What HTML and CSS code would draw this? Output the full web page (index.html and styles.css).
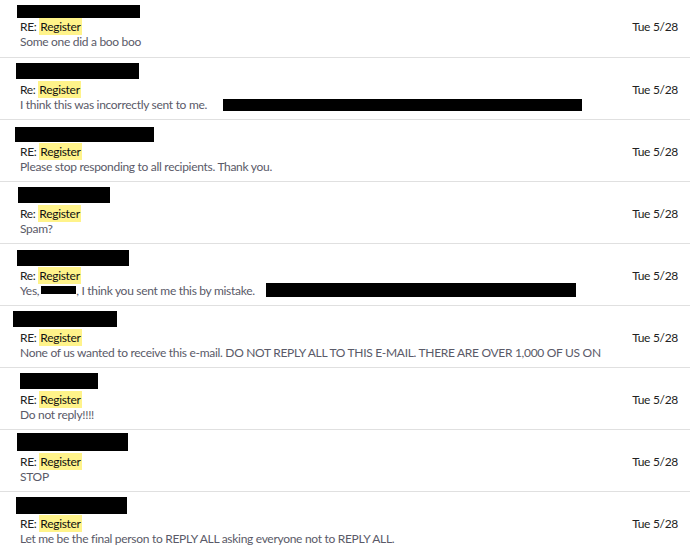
FILE: index.html
```html
<!DOCTYPE html>
<html>
<head>
<meta charset="utf-8">
<link rel="stylesheet" href="styles.css">
</head>
<body>
<div class="list">
  <div class="row first">
    <div class="main">
      <div class="sender"><span class="redact" style="width:123px;height:13px;margin-left:-3px;margin-top:5px"></span></div>
      <div class="subject">RE: <mark>Register</mark></div>
      <div class="preview">Some one did a boo boo</div>
    </div>
    <div class="date">Tue 5/28</div>
  </div>
  <div class="row">
    <div class="main">
      <div class="sender"><span class="redact" style="width:123px;height:16px;margin-left:-4px"></span></div>
      <div class="subject">Re: <mark>Register</mark></div>
      <div class="preview">I think this was incorrectly sent to me.<span class="redact inl" style="width:359px;height:12px;margin-left:16px"></span></div>
    </div>
    <div class="date">Tue 5/28</div>
  </div>
  <div class="row">
    <div class="main">
      <div class="sender"><span class="redact" style="width:139px;height:15px;margin-left:-5px;margin-top:2px"></span></div>
      <div class="subject">RE: <mark>Register</mark></div>
      <div class="preview">Please stop responding to all recipients. Thank you.</div>
    </div>
    <div class="date">Tue 5/28</div>
  </div>
  <div class="row">
    <div class="main">
      <div class="sender"><span class="redact" style="width:92px;height:16px;margin-left:-2px"></span></div>
      <div class="subject">Re: <mark>Register</mark></div>
      <div class="preview">Spam?</div>
    </div>
    <div class="date">Tue 5/28</div>
  </div>
  <div class="row">
    <div class="main">
      <div class="sender"><span class="redact" style="width:112px;height:16px;margin-left:-3px;margin-top:1px"></span></div>
      <div class="subject">Re: <mark>Register</mark></div>
      <div class="preview">Yes,<span class="redact inl" style="width:35px;height:8px;margin-left:2px;vertical-align:1px"></span>, I think you sent me this by mistake.<span class="redact inl" style="width:310px;height:14px;margin-left:11px"></span></div>
    </div>
    <div class="date">Tue 5/28</div>
  </div>
  <div class="row">
    <div class="main">
      <div class="sender"><span class="redact" style="width:104px;height:16px;margin-left:-7px"></span></div>
      <div class="subject">RE: <mark>Register</mark></div>
      <div class="preview">None of us wanted to receive this e-mail. DO NOT REPLY ALL TO THIS E-MAIL. THERE ARE OVER 1,000 OF US ON</div>
    </div>
    <div class="date">Tue 5/28</div>
  </div>
  <div class="row">
    <div class="main">
      <div class="sender"><span class="redact" style="width:78px;height:16px"></span></div>
      <div class="subject">RE: <mark>Register</mark></div>
      <div class="preview">Do not reply!!!!</div>
    </div>
    <div class="date">Tue 5/28</div>
  </div>
  <div class="row">
    <div class="main">
      <div class="sender"><span class="redact" style="width:111px;height:18px;margin-left:-3px;margin-top:-2px"></span></div>
      <div class="subject">RE: <mark>Register</mark></div>
      <div class="preview">STOP</div>
    </div>
    <div class="date">Tue 5/28</div>
  </div>
  <div class="row last">
    <div class="main">
      <div class="sender"><span class="redact" style="width:111px;height:17px;margin-left:-4px"></span></div>
      <div class="subject">RE: <mark>Register</mark></div>
      <div class="preview">Let me be the final person to REPLY ALL asking everyone not to REPLY ALL.</div>
    </div>
    <div class="date">Tue 5/28</div>
  </div>
</div>
</body>
</html>
```
FILE: styles.css
```css
html, body {
  margin: 0;
  padding: 0;
  background: #ffffff;
}
body {
  font-family: Lato, "Liberation Sans", Arial, sans-serif;
  font-size: 12px;
  letter-spacing: -0.3px;
  overflow: hidden;
}
.list {
  width: 690px;
}
.row {
  display: flex;
  box-sizing: border-box;
  height: 62px;
  border-bottom: 1px solid #e0e0e0;
  padding: 5px 12px 0 20px;
}
.row.first {
  height: 58px;
  padding-top: 0;
}
.row.last {
  border-bottom: none;
}
.main {
  flex: 1;
  min-width: 0;
  display: flex;
  flex-direction: column;
}
.sender {
  height: 19px;
}
.redact {
  display: block;
  background: #000;
}
.redact.inl {
  display: inline-block;
  vertical-align: -2px;
}
.subject {
  height: 15px;
  line-height: 15px;
  color: #222222;
  white-space: nowrap;
}
mark {
  background: #fff38a;
  color: #111;
  padding: 1px 1px 1px 1px;
}
.preview {
  height: 15px;
  line-height: 15px;
  color: #5a5a68;
  white-space: nowrap;
}
.date {
  padding-top: 19px;
  line-height: 15px;
  color: #222222;
  white-space: nowrap;
}
```
